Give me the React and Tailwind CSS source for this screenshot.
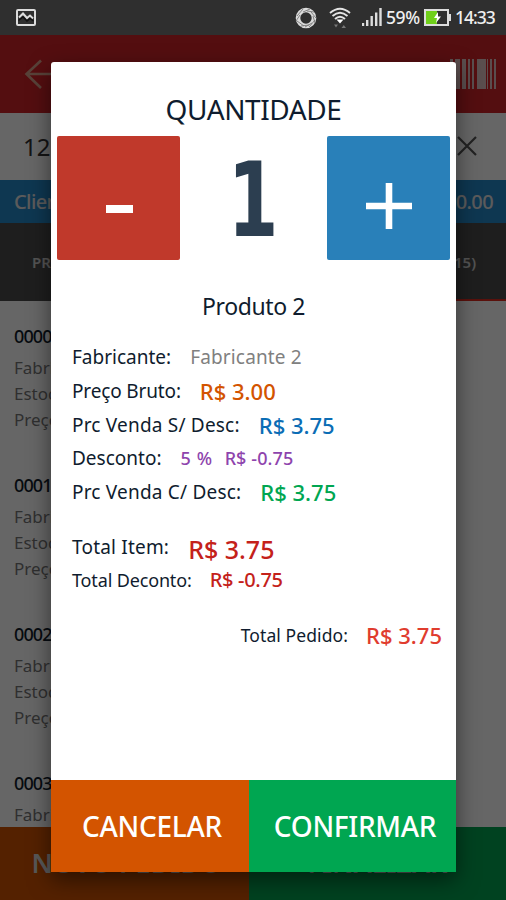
import { useState } from 'react';

const codigos = ['0000', '0001', '0002', '0003'];

const StatusBar = () => (
  <div className="flex h-[35px] items-center bg-[#2f2f2f] pl-[16px] pr-[10px] text-[#f0f0f0]">
    <svg width="20" height="17" viewBox="0 0 20 17" fill="none" stroke="#dcdcdc" strokeWidth="2">
      <rect x="1" y="1" width="18" height="15" rx="1" />
      <path d="M3 8.5 L7 4.5 L11 9 L14 6.5 L17 9.5" />
      <path d="M2.5 11.5 L7 8 L11 12 L14 9.5 L17.5 12" stroke="#111" strokeWidth="1.4" />
    </svg>
    <div className="ml-auto flex items-center">
      <svg className="mr-[11px]" width="24" height="22" viewBox="0 0 24 22" fill="none">
        <circle cx="12" cy="11" r="8" stroke="#dcdcdc" strokeWidth="4.6" />
        <path
          d="M3 9 L9 2 M2 14 L6 8 M9 5 L16 2 M13 4 L20 5 M17 5 L22 11 M19 9 L21 16 M21 13 L15 20 M18 16 L11 20 M15 18 L7 19 M10 19 L3 14"
          stroke="#777"
          strokeWidth="0.9"
        />
      </svg>
      <svg className="mr-[11px]" width="22" height="22" viewBox="0 0 22 22" fill="none" stroke="#e4e4e4" strokeWidth="1.9">
        <path d="M1 6 Q11 -2.5 21 6" />
        <path d="M3.5 9 Q11 2.5 18.5 9" />
        <path d="M6 12 Q11 7.5 16 12" />
        <path d="M7.5 12.5 H14.5 L11 16.5 Z" fill="#fff" stroke="none" />
        <path d="M5 17.5 H9 L7 20.5 Z M12.5 21 H17 L14.8 18 Z" fill="#777" stroke="none" />
      </svg>
      <svg className="mr-[4px]" width="20" height="19" viewBox="0 0 20 19" fill="#ddd">
        <rect x="0" y="15" width="2.2" height="3" />
        <rect x="4" y="12" width="2.4" height="6" />
        <rect x="8.5" y="8" width="2.4" height="10" />
        <rect x="13" y="4.5" width="2.4" height="13.5" />
        <rect x="17.3" y="0" width="2.4" height="18" />
      </svg>
      <span className="w-[38px] whitespace-nowrap text-[17.5px] font-medium leading-none tracking-[-0.4px]">59%</span>
      <svg className="mr-[4px]" width="27" height="17" viewBox="0 0 27 17">
        <rect x="1" y="1" width="23" height="15" fill="#2f2f2f" stroke="#ddd" strokeWidth="2" />
        <rect x="2" y="2" width="11" height="13" fill="#6fcf1a" />
        <rect x="25" y="5" width="2" height="7" fill="#ddd" />
        <path d="M14 3 L10 9 H13 L12 14 L17 7.5 H14 Z" fill="#fff" />
      </svg>
      <span className="w-[41px] whitespace-nowrap text-[17.5px] font-medium leading-none tracking-[-1px]">14:33</span>
    </div>
  </div>
);

// Pantalla del pedido, queda por debajo del diálogo
const PedidoScreen = () => (
  <div className="flex h-[865px] flex-col bg-white">
    <div className="flex h-[78px] shrink-0 items-center justify-between bg-[#d32529] pl-[24px] pr-[10px]">
      <svg width="32" height="30" viewBox="0 0 32 30" fill="none" stroke="#dda590" strokeWidth="2.6">
        <path d="M17 1.5 L2.5 15 L17 29 M2.5 15 H32" />
      </svg>
      <svg width="46" height="30" viewBox="0 0 46 30" fill="#e0c4c2">
        <rect x="0" y="0" width="3" height="30" />
        <rect x="5" y="0" width="5" height="30" />
        <rect x="12" y="0" width="4" height="30" />
        <rect x="18" y="0" width="2" height="30" />
        <rect x="22" y="0" width="2" height="30" />
        <rect x="27" y="0" width="9" height="30" />
        <rect x="37" y="0" width="1" height="30" />
        <rect x="40" y="0" width="2" height="30" />
        <rect x="44" y="0" width="2" height="30" />
      </svg>
    </div>
    <div className="flex h-[67px] shrink-0 items-center justify-between pl-[23px] pr-[29px] text-[24px] text-[#333]">
      <span>12</span>
      <svg className="mb-[1px]" width="20" height="20" viewBox="0 0 20 20" stroke="#555" strokeWidth="2.2">
        <path d="M1 1 L19 19 M19 1 L1 19" />
      </svg>
    </div>
    <div className="flex h-[43px] shrink-0 items-center justify-between bg-[#2589cb] pl-[14px] pr-[13px] text-[20px] font-medium tracking-[-0.6px] text-[#e4e4e4]">
      <span>Cliente</span>
      <span>R$ 0.00</span>
    </div>
    <div className="flex h-[78px] shrink-0 bg-[#4d4d4d] text-[15px] font-semibold text-[#cfcfcf]">
      <div className="flex flex-1 items-center pl-[32px] pt-[1px]">PRODUTOS</div>
      <div className="flex flex-1 items-center justify-end border-b-2 border-[#e02b20] pr-[30px] pt-[3px]">ITENS (15)</div>
    </div>
    <div className="flex-1 overflow-hidden pl-[14px] pt-[21px]">
      {codigos.map((codigo) => (
        <div key={codigo} className="h-[149px] text-[17px] leading-[26px] text-[#777]">
          <p className="mb-[4px] text-[18px] font-medium leading-[29px] tracking-[-0.9px] text-[#111c2c]">{codigo}</p>
          <p>Fabricante</p>
          <p>Estoque</p>
          <p>Preço</p>
        </div>
      ))}
    </div>
    <div className="flex h-[73px] shrink-0 text-[27px] font-semibold text-[#ddd]">
      <div className="flex w-[249px] items-center justify-center bg-[#d35400] pl-[4px]">NOVO PEDIDO</div>
      <div className="flex flex-1 items-center justify-center bg-[#00a651]">FINALIZAR</div>
    </div>
  </div>
);

const App = () => {
  const [cantidad, setCantidad] = useState(1);

  return (
    <div className="relative h-[900px] w-[506px] overflow-hidden bg-black font-['Noto_Sans',sans-serif]">
      <StatusBar />
      <PedidoScreen />

      {/* Diálogo de cantidad */}
      <div className="absolute inset-x-0 bottom-0 top-[35px] bg-black/60 pl-[51px] pt-[27px]">
        <div className="flex h-[810px] w-[405px] flex-col overflow-hidden rounded-t-[3px] bg-white text-[#0f1c2e] shadow-[0_8px_22px_rgba(0,0,0,0.5)]">
          <h2 className="pt-[28px] text-center text-[28px] font-[450] leading-[38px] tracking-[-0.4px]">QUANTIDADE</h2>
          <div className="mt-[8px] flex h-[124px] items-center justify-between px-[6px]">
            <button
              onClick={() => setCantidad(Math.max(1, cantidad - 1))}
              className="flex h-[124px] w-[123px] items-center justify-center rounded-[2px] bg-[#c0392b] pl-[2px] pt-[22px]"
            >
              <span className="h-[8px] w-[27px] bg-white" />
            </button>
            <span className="mt-[4px] scale-x-[0.7] font-['DejaVu_Sans'] text-[104px] font-bold leading-none text-[#2c3e50]">
              {cantidad}
            </span>
            <button
              onClick={() => setCantidad(cantidad + 1)}
              className="flex h-[124px] w-[123px] items-center justify-center rounded-[2px] bg-[#2980b9] pt-[16px]"
            >
              <svg width="46" height="46" viewBox="0 0 46 46" stroke="#fff" strokeWidth="6.6">
                <path d="M23 0 V46 M0 23 H46" />
              </svg>
            </button>
          </div>
          <p className="mt-[29px] text-center text-[23px] font-[450] leading-[34px] tracking-[-0.4px]">Produto 2</p>

          <div className="mt-[17px] whitespace-nowrap pl-[21px] text-[19px] leading-[34px]">
            <div className="flex h-[34px] items-center">
              <span className="mr-[19px]">Fabricante:</span>
              <span className="tracking-[0.15px] text-[#808080]">Fabricante 2</span>
            </div>
            <div className="flex h-[34px] items-center">
              <span className="mr-[19px] tracking-[-0.15px]">Preço Bruto:</span>
              <span className="text-[22px] font-medium text-[#d35400]">R$ 3.00</span>
            </div>
            <div className="flex h-[33px] items-center">
              <span className="mr-[19px] tracking-[0.2px]">Prc Venda S/ Desc:</span>
              <span className="pt-[1px] text-[22px] font-medium text-[#0b6db5]">R$ 3.75</span>
            </div>
            <div className="flex h-[34px] items-center">
              <span className="mr-[19px]">Desconto:</span>
              <span className="mr-[12px] text-[18px] font-medium tracking-[0.6px] text-[#8e44ad]">5 %</span>
              <span className="text-[18px] font-medium tracking-[0.1px] text-[#8e44ad]">R$ -0.75</span>
            </div>
            <div className="flex h-[34px] items-center">
              <span className="mr-[19px] tracking-[0.2px]">Prc Venda C/ Desc:</span>
              <span className="text-[22px] font-medium text-[#00a651]">R$ 3.75</span>
            </div>
            <div className="mt-[21px] flex h-[34px] items-center">
              <span className="mr-[19px] tracking-[0.2px]">Total Item:</span>
              <span className="pt-[4px] text-[25px] font-medium text-[#c4211a]">R$ 3.75</span>
            </div>
            <div className="flex h-[32px] items-center">
              <span className="mr-[18px] text-[18px] tracking-[-0.15px]">Total Deconto:</span>
              <span className="text-[20px] font-medium tracking-[-0.3px] text-[#c4211a]">R$ -0.75</span>
            </div>
          </div>
          <div className="mt-[22px] flex h-[34px] items-center justify-end whitespace-nowrap pr-[14px]">
            <span className="mr-[18px] text-[17.5px] tracking-[0.1px]">Total Pedido:</span>
            <span className="text-[22px] font-medium text-[#e03c2e]">R$ 3.75</span>
          </div>

          <div className="mt-auto flex h-[92px] text-[28px] font-medium text-white">
            <button className="w-[198px] bg-[#d35400] pl-[4px] tracking-[-0.3px]">CANCELAR</button>
            <button className="flex-1 bg-[#00a651] pl-[5px] tracking-[-0.3px]">CONFIRMAR</button>
          </div>
        </div>
      </div>
    </div>
  );
};

export default App;
